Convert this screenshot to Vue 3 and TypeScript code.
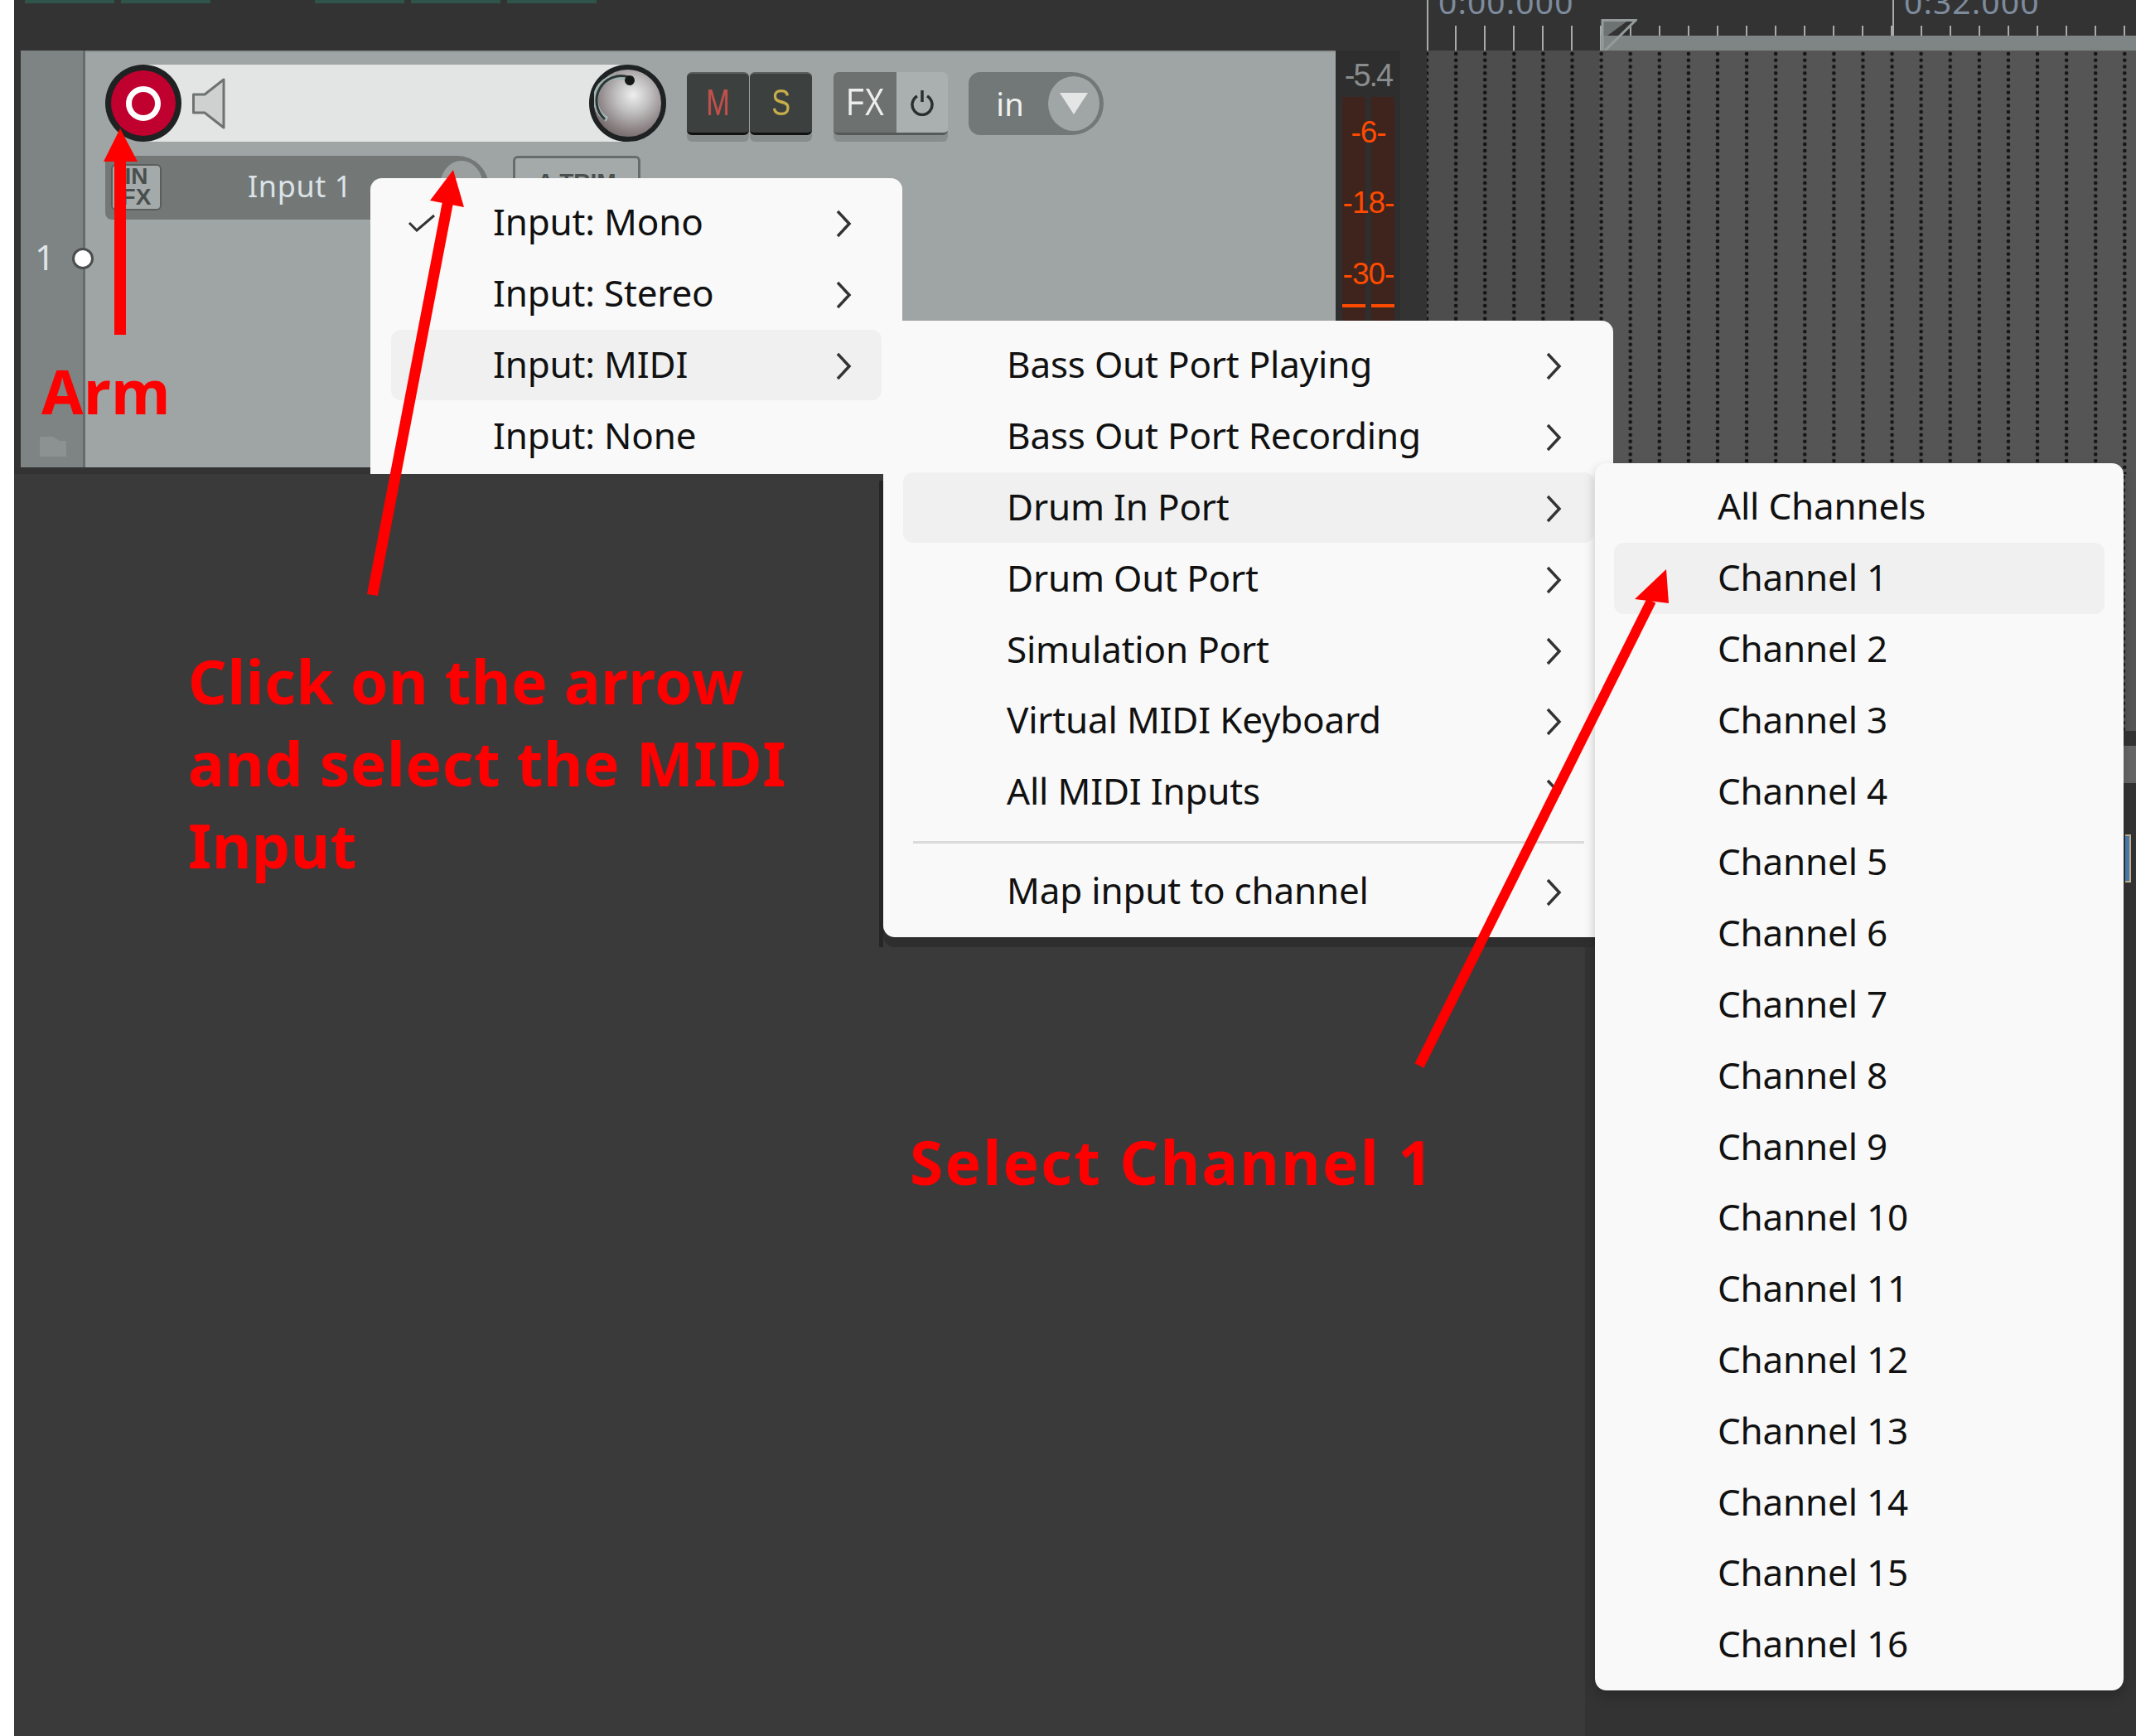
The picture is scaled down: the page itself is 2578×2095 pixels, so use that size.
<template>
  <div class="page">
    <div class="white-strip"></div>
    <div class="workspace">
      <div class="upper">
        <div class="clips">
          <span v-for="c in clips" :key="c" class="clip" :class="{ 'clip--gap': c === 2 }"></span>
        </div>
        <div class="track">
          <div class="gutter">
            <span class="track-num">1</span>
            <span class="gutter-dot"></span>
            <svg class="folder" viewBox="0 0 32 24"><path d="M0 0h16l8 5h8v19H0z" fill="#8c9291" /></svg>
          </div>
          <div class="controls">
            <div class="top-row">
              <div class="name-field">
                <div class="arm"><span class="arm-ring"></span></div>
                <svg class="speaker" viewBox="0 0 40 62">
                  <path d="M1.500 20H15L38 2v58L15 42H1.500z" fill="#cfd1d0" stroke="#6e7372" stroke-width="3" stroke-linejoin="round" />
                </svg>
                <div class="knob">
                  <svg viewBox="0 0 81 81">
                    <path d="M16 60A27 27 0 0 1 42 12" fill="none" stroke="#9fb5b2" stroke-width="6" />
                    <path d="M13 60A30 30 0 0 1 42 9" fill="none" stroke="#2d3535" stroke-width="3" />
                    <circle cx="43" cy="13" r="6" fill="#161818" />
                  </svg>
                </div>
              </div>
              <div class="btn-group">
                <span class="dark-btn dark-btn--m"><span class="narrow">M</span></span>
                <span class="dark-btn dark-btn--s"><span class="narrow">S</span></span>
              </div>
              <div class="fx-btn">
                <span class="fx-label"><span class="narrow">FX</span></span>
                <span class="fx-power">
                  <svg viewBox="0 0 30 34" width="30" height="34">
                    <path d="M9 10a12 12 0 1 0 12 0M15 3v14" fill="none" stroke="#2c2f2f" stroke-width="3.500" />
                  </svg>
                </span>
              </div>
              <div class="in-btn">
                <span class="in-label">in</span>
                <span class="in-circle"><span class="in-tri"></span></span>
              </div>
            </div>
            <div class="input-row">
              <div class="input-field">
                <span class="in-fx">IN<br>FX</span>
                <span class="input-name">Input 1</span>
                <span class="input-knob"></span>
              </div>
              <div class="trim-btn">A TRIM</div>
            </div>
          </div>
        </div>
        <div class="meter">
          <div class="meter-peak">-5.4</div>
          <div class="meter-channels">
            <span class="meter-ch"></span>
            <span class="meter-ch"></span>
            <span v-for="m in meterMarks" :key="m.label" class="meter-mark" :style="{ top: m.top + 'px' }">{{ m.label }}</span>
            <span class="meter-dash meter-dash--a"></span>
            <span class="meter-dash meter-dash--b"></span>
          </div>
        </div>
        <div class="meter-gap"></div>
        <div class="arrange">
          <div class="ruler">
            <span class="time time--a">0:00.000</span>
            <span class="time time--b">0:32.000</span>
            <span class="major major--a"></span>
            <span class="major major--b"></span>
            <div class="loop-band"></div>
            <svg class="loop-flag" viewBox="0 0 44 61">
              <path d="M3 24h31L8 43H3z" fill="#6d7372" />
              <circle cx="31" cy="38" r="4" fill="#2a2c2c" />
              <path d="M2 61V24.500h40L5 61" fill="none" stroke="#959b9a" stroke-width="3" />
            </svg>
          </div>
          <div class="grid">
            <div class="grid-shade"></div>
          </div>
        </div>
      </div>
      <div class="lower">
        <div class="lower-left"><span class="menu-edge"></span></div>
        <div class="lower-right">
          <div class="grid-rest"></div>
          <div class="track-gap"></div>
          <div class="scroll-gray"></div>
          <div class="scroll-dark"><span class="blue-mark"></span></div>
        </div>
      </div>
    </div>

    <ul class="menu menu--input">
      <li v-for="(r, i) in inputRows" :key="r" class="row" :class="{ 'row--on': i === 2 }">
        <svg v-if="i === 0" class="check" viewBox="0 0 34 22"><path d="M2 11l9 9L32 2" fill="none" stroke="#333" stroke-width="3" /></svg>
        <span class="row-text">{{ r }}</span>
        <svg v-if="i < 3" class="chev" viewBox="0 0 20 34"><path d="M3 2l14 15L3 32" fill="none" stroke="#333" stroke-width="3.500" /></svg>
      </li>
    </ul>
    <ul class="menu menu--midi">
      <li v-for="(r, i) in midiRows" :key="r" class="row" :class="{ 'row--on': i === 2 }">
        <span class="row-text">{{ r }}</span>
        <svg class="chev" viewBox="0 0 20 34"><path d="M3 2l14 15L3 32" fill="none" stroke="#333" stroke-width="3.500" /></svg>
      </li>
      <li class="sep"></li>
      <li class="row">
        <span class="row-text">Map input to channel</span>
        <svg class="chev" viewBox="0 0 20 34"><path d="M3 2l14 15L3 32" fill="none" stroke="#333" stroke-width="3.500" /></svg>
      </li>
    </ul>
    <ul class="menu menu--channels">
      <li v-for="(r, i) in channelRows" :key="r" class="row" :class="{ 'row--on': i === 1 }">
        <span class="row-text">{{ r }}</span>
      </li>
    </ul>

    <svg class="arrows" viewBox="0 0 2578 2095">
      <g fill="#ff0000" stroke="none">
        <path d="M138 404V193h14v211z" />
        <path d="M145 155l21 40h-41z" />
        <path d="M443 717l91-474 13 2-91 474z" />
        <path d="M547 205l13 45-41-8z" />
        <path d="M1707.600 1283.300l280-561 10.800 5.400-280 561z" />
        <path d="M2011 687l3 41-41-5z" />
      </g>
    </svg>
    <div class="note note--arm">Arm</div>
    <div class="note note--click">Click on the arrow<br>and select the MIDI<br>Input</div>
    <div class="note note--channel">Select Channel 1</div>
  </div>
</template>

<script setup lang="ts">
const clips = [0, 1, 2, 3, 4]

const meterMarks = [
  { label: '-6-', top: 26 },
  { label: '-18-', top: 111 },
  { label: '-30-', top: 197 },
]

const inputRows = ['Input: Mono', 'Input: Stereo', 'Input: MIDI', 'Input: None']

const midiRows = [
  'Bass Out Port Playing',
  'Bass Out Port Recording',
  'Drum In Port',
  'Drum Out Port',
  'Simulation Port',
  'Virtual MIDI Keyboard',
  'All MIDI Inputs',
]

const channelRows = ['All Channels']
for (let n = 1; n <= 16; n++) {
  channelRows.push('Channel ' + n)
}
</script>

<style>
html,
body {
  margin: 0;
  background: #fff;
}
</style>

<style scoped>
.page {
  position: relative;
  display: flex;
  width: 2578px;
  height: 2095px;
  overflow: hidden;
  font-family: "Noto Sans", sans-serif;
}

.white-strip {
  width: 17px;
  flex: none;
  background: #fff;
}

.workspace {
  flex: 1;
  display: flex;
  flex-direction: column;
  min-width: 0;
}

.upper {
  position: relative;
  display: flex;
  height: 572px;
  padding-left: 8px;
  box-sizing: border-box;
  background: #333;
  flex: none;
}

.clips {
  position: absolute;
  left: 13px;
  top: 0;
  display: flex;
  gap: 8px;
}

.clip {
  width: 108px;
  height: 4px;
  background: #2f5449;
}

.clip--gap {
  margin-left: 118px;
}

.track {
  display: flex;
  width: 1587px;
  height: 503px;
  margin-top: 61px;
  background: #9fa5a4;
  flex: none;
  box-shadow: inset 0 2px 0 #8d9392;
}

.gutter {
  position: relative;
  width: 75px;
  flex: none;
  background: #7d8483;
  border-right: 3px solid #666c6b;
  box-sizing: content-box;
}

.track-num {
  position: absolute;
  left: 17px;
  top: 224px;
  font-size: 42px;
  line-height: 50px;
  color: #dfe5ea;
}

.gutter-dot {
  position: absolute;
  left: 62px;
  top: 238px;
  width: 26px;
  height: 26px;
  box-sizing: border-box;
  border-radius: 50%;
  background: #fff;
  border: 3px solid #4a4f4e;
}

.folder {
  position: absolute;
  left: 23px;
  top: 466px;
  width: 32px;
  height: 24px;
}

.controls {
  flex: 1;
  padding: 17px 0 0 24px;
  min-width: 0;
}

.top-row {
  display: flex;
  align-items: center;
  height: 93px;
}

.name-field {
  display: flex;
  align-items: center;
  width: 677px;
  height: 93px;
  background: linear-gradient(#e3e5e4, #e3e5e4) no-repeat center / calc(100% - 92px) 100%;
}

.arm {
  display: flex;
  align-items: center;
  justify-content: center;
  width: 92px;
  height: 93px;
  box-sizing: border-box;
  border: 7px solid #1f2222;
  border-radius: 50%;
  background: #c0002e;
  flex: none;
}

.arm-ring {
  width: 42px;
  height: 42px;
  box-sizing: border-box;
  border: 7px solid #fff;
  border-radius: 50%;
}

.speaker {
  width: 40px;
  height: 62px;
  margin-left: 13px;
  flex: none;
}

.knob {
  width: 93px;
  height: 93px;
  margin-left: auto;
  flex: none;
  box-sizing: border-box;
  border: 6px solid #1f2222;
  border-radius: 50%;
  background: radial-gradient(circle at 58% 38%, #eeeeee 0%, #c4c3c3 28%, #8b8284 62%, #524649 100%);
}

.knob svg {
  display: block;
  width: 81px;
  height: 81px;
}

.btn-group {
  display: flex;
  gap: 1px;
  margin-left: 25px;
  filter: drop-shadow(0 8px 0 #878d8c);
}

.dark-btn {
  display: flex;
  align-items: center;
  justify-content: center;
  width: 75px;
  height: 76px;
  box-sizing: border-box;
  border-radius: 6px;
  background: #3c403f;
  border-top: 2px solid #5b605f;
  border-bottom: 3px solid #111;
  font-size: 44px;
  font-family: "Liberation Sans", sans-serif;
}

.narrow {
  display: inline-block;
  transform: scaleX(0.78);
}

.dark-btn--m {
  color: #c2514b;
}

.dark-btn--s {
  color: #c8ae4a;
}

.fx-btn {
  display: flex;
  width: 138px;
  height: 76px;
  margin-left: 26px;
  border-radius: 6px;
  overflow: hidden;
  border-bottom: 3px solid #555a59;
  box-sizing: border-box;
  filter: drop-shadow(0 8px 0 #878d8c);
}

.fx-label {
  display: flex;
  align-items: center;
  justify-content: center;
  width: 76px;
  background: #6d7271;
  color: #eceeee;
  font-size: 46px;
  font-family: "Liberation Sans", sans-serif;
}

.fx-power {
  display: flex;
  align-items: center;
  justify-content: center;
  flex: 1;
  background: #a9b0af;
}

.in-btn {
  display: flex;
  align-items: center;
  width: 163px;
  height: 76px;
  margin-left: 25px;
  border-radius: 14px 38px 38px 14px;
  background: #727877;
  box-sizing: border-box;
  padding-right: 5px;
}

.in-label {
  width: 90px;
  padding-left: 10px;
  box-sizing: border-box;
  text-align: center;
  color: #eef0f0;
  font-size: 38px;
  line-height: 76px;
}

.in-circle {
  display: flex;
  align-items: center;
  justify-content: center;
  width: 62px;
  height: 66px;
  margin-left: auto;
  border-radius: 50%;
  background: #a0a6a5;
}

.in-tri {
  width: 0;
  height: 0;
  border-left: 17px solid transparent;
  border-right: 17px solid transparent;
  border-top: 26px solid #e4e6e6;
}

.input-row {
  display: flex;
  margin-top: 17px;
}

.input-field {
  position: relative;
  width: 463px;
  height: 77px;
  border-radius: 8px 38px 0 8px;
  background: #737877;
}

.in-fx {
  position: absolute;
  left: 7px;
  top: 10px;
  width: 61px;
  height: 56px;
  box-sizing: border-box;
  border-radius: 6px;
  background: #a4aaa9;
  border: 2px solid #5a5f5e;
  color: #4a4f4e;
  font: bold 28px/25px "Liberation Sans", sans-serif;
  text-align: center;
}

.input-name {
  position: absolute;
  left: 172px;
  top: 12px;
  font-size: 36px;
  line-height: 50px;
  letter-spacing: 0.600px;
  color: #dce2e6;
}

.input-knob {
  position: absolute;
  left: 404px;
  top: 6px;
  width: 52px;
  height: 62px;
  border-radius: 50%;
  background: #9aa09f;
}

.trim-btn {
  width: 154px;
  height: 70px;
  margin-left: 29px;
  box-sizing: border-box;
  border: 3px solid #666c6b;
  border-radius: 6px;
  background: #a4aaa9;
  color: #4a4f4e;
  font: bold 28px/38px "Liberation Sans", sans-serif;
  padding-top: 10px;
  text-align: center;
  overflow: hidden;
}

.meter {
  width: 78px;
  height: 511px;
  margin-top: 61px;
  padding: 0 7px 0 8px;
  box-sizing: border-box;
  background: #2e2e2e;
  flex: none;
}

.meter-peak {
  height: 56px;
  padding-top: 8px;
  box-sizing: border-box;
  text-align: center;
  color: #8a8d8d;
  font: 38px/44px "Liberation Sans", sans-serif;
  letter-spacing: -2px;
}

.meter-channels {
  position: relative;
  display: flex;
  gap: 7px;
  height: 455px;
}

.meter-ch {
  width: 28px;
  background: #3e241c;
}

.meter-mark {
  position: absolute;
  left: -4px;
  right: -4px;
  text-align: center;
  color: #ff4a00;
  font: 37px/34px "Liberation Sans", sans-serif;
  letter-spacing: -1px;
}

.meter-dash {
  position: absolute;
  top: 250px;
  width: 28px;
  height: 4px;
  background: #ff4a00;
}

.meter-dash--a {
  left: 0;
}

.meter-dash--b {
  left: 35px;
}

.meter-gap {
  width: 32px;
  flex: none;
}

.arrange {
  flex: 1;
  min-width: 0;
  display: flex;
  flex-direction: column;
}

.ruler {
  position: relative;
  height: 61px;
  overflow: hidden;
  flex: none;
  background: repeating-linear-gradient(90deg, #a9abab 0 2px, transparent 2px 35.1px) 34px 31px / 100% 30px no-repeat;
}

.time {
  position: absolute;
  top: -23px;
  font-size: 39px;
  line-height: 50px;
  letter-spacing: 1.100px;
  color: #7d8b9d;
}

.time--a {
  left: 14px;
}

.time--b {
  left: 576px;
}

.major {
  position: absolute;
  top: 0;
  width: 2px;
  height: 61px;
  background: #a9abab;
}

.major--a {
  left: 0;
}

.major--b {
  left: 562px;
}

.loop-band {
  position: absolute;
  left: 210px;
  right: 0;
  top: 43px;
  height: 18px;
  background: #7f8584;
}

.loop-flag {
  position: absolute;
  left: 210px;
  top: 0;
  width: 44px;
  height: 61px;
}

.grid {
  position: relative;
  flex: 1;
  background-color: #555;
  background-image: radial-gradient(circle, #151515 0 2px, transparent 2.600px);
  background-size: 35.1px 7.8px;
  background-position: -17.500px 0;
}

.grid-shade {
  position: absolute;
  left: 0;
  top: 0;
  bottom: 0;
  width: 208px;
  background: rgba(0, 0, 0, 0.09);
}

.lower {
  flex: 1;
  display: flex;
  min-height: 0;
}

.lower-left {
  position: relative;
  width: 1896px;
  flex: none;
  background: #3a3a3a;
}

.menu-edge {
  position: absolute;
  left: 1044px;
  top: 8px;
  width: 5px;
  height: 563px;
  background: #262626;
}

.lower-right {
  flex: 1;
  display: flex;
  flex-direction: column;
  background: #333;
}

.grid-rest {
  height: 310px;
  background-color: #555;
  background-image: radial-gradient(circle, #151515 0 2px, transparent 2.600px);
  background-size: 35.1px 7.8px;
  background-position: 0.500px 0;
  flex: none;
}

.track-gap {
  height: 18px;
  background: #333;
  flex: none;
}

.scroll-gray {
  height: 45px;
  background: #666;
  flex: none;
}

.scroll-dark {
  position: relative;
  flex: 1;
  background: #333;
}

.blue-mark {
  position: absolute;
  right: 6px;
  top: 62px;
  width: 7px;
  height: 58px;
  box-sizing: border-box;
  background: #4a7fb5;
  border: 2px solid #c7b48a;
  border-left: none;
}

.menu {
  position: absolute;
  margin: 0;
  list-style: none;
  box-sizing: border-box;
  background: #f9f9f9;
  border-radius: 14px;
  font-size: 44px;
  color: #111;
  letter-spacing: -0.200px;
}

.menu--input {
  left: 447px;
  top: 215px;
  width: 642px;
  height: 357px;
  padding: 11px 25px 0;
  border-radius: 14px 14px 0 0;
  overflow: hidden;
  z-index: 1;
}

.menu--midi {
  left: 1066px;
  top: 387px;
  width: 881px;
  height: 744px;
  padding: 11px 23px 0 24px;
  z-index: 2;
  box-shadow: 0 12px 0 #2e2e2e;
}

.menu--channels {
  left: 1925px;
  top: 559px;
  width: 638px;
  height: 1481px;
  padding: 10px 23px 0;
  z-index: 3;
  box-shadow: 0 6px 14px rgba(0, 0, 0, 0.22);
}

.row {
  position: relative;
  display: flex;
  align-items: center;
  justify-content: space-between;
  height: 85.8px;
  padding: 0 39px 0 125px;
  box-sizing: border-box;
  border-radius: 12px;
  white-space: nowrap;
}

.row-text {
  margin-bottom: 3px;
}

.menu--input .row {
  padding: 0 36px 0 123px;
}

.row--on {
  background: #f0f0f0;
}

.check {
  position: absolute;
  left: 20px;
  top: 32px;
  width: 34px;
  height: 22px;
}

.chev {
  width: 20px;
  height: 34px;
  margin-top: 3px;
  flex: none;
}

.sep {
  height: 3px;
  margin: 16px 12px 15px 12px;
  background: #dadada;
}

.arrows {
  position: absolute;
  left: 0;
  top: 0;
  width: 2578px;
  height: 2095px;
  z-index: 4;
  pointer-events: none;
}

.note {
  position: absolute;
  z-index: 5;
  color: #ff0000;
  font-family: "Noto Sans", sans-serif;
  font-weight: 700;
  font-size: 73px;
  line-height: 99px;
  letter-spacing: 0.600px;
  white-space: nowrap;
}

.note--arm {
  left: 50px;
  top: 422px;
}

.note--click {
  left: 227px;
  top: 772px;
}

.note--channel {
  left: 1098px;
  top: 1352px;
  letter-spacing: 2.300px;
}
</style>
